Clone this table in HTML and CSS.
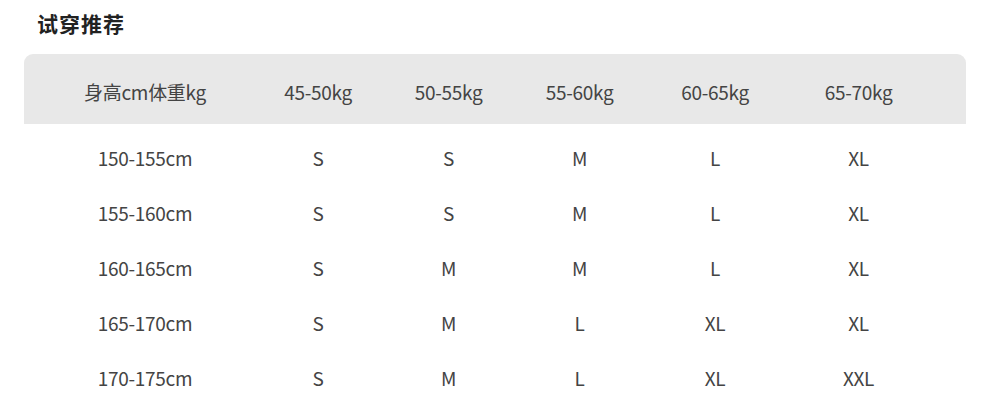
FILE: index.html
```html
<!DOCTYPE html>
<html lang="zh">
<head>
<meta charset="utf-8">
<link rel="stylesheet" href="styles.css">
</head>
<body>
<div class="page">
  <h2 class="title">试穿推荐</h2>
  <div class="table">
    <div class="row head">
      <div class="cell c1">身高cm体重kg</div>
      <div class="cell c2">45-50kg</div>
      <div class="cell c3">50-55kg</div>
      <div class="cell c4">55-60kg</div>
      <div class="cell c5">60-65kg</div>
      <div class="cell c6">65-70kg</div>
    </div>
    <div class="body">
      <div class="row">
        <div class="cell c1">150-155cm</div><div class="cell c2">S</div><div class="cell c3">S</div><div class="cell c4">M</div><div class="cell c5">L</div><div class="cell c6">XL</div>
      </div>
      <div class="row">
        <div class="cell c1">155-160cm</div><div class="cell c2">S</div><div class="cell c3">S</div><div class="cell c4">M</div><div class="cell c5">L</div><div class="cell c6">XL</div>
      </div>
      <div class="row">
        <div class="cell c1">160-165cm</div><div class="cell c2">S</div><div class="cell c3">M</div><div class="cell c4">M</div><div class="cell c5">L</div><div class="cell c6">XL</div>
      </div>
      <div class="row">
        <div class="cell c1">165-170cm</div><div class="cell c2">S</div><div class="cell c3">M</div><div class="cell c4">L</div><div class="cell c5">XL</div><div class="cell c6">XL</div>
      </div>
      <div class="row">
        <div class="cell c1">170-175cm</div><div class="cell c2">S</div><div class="cell c3">M</div><div class="cell c4">L</div><div class="cell c5">XL</div><div class="cell c6">XXL</div>
      </div>
    </div>
  </div>
</div>
</body>
</html>
```
FILE: styles.css
```css
html, body {
  margin: 0;
  padding: 0;
  background: #ffffff;
}
body {
  font-family: "Noto Sans CJK SC", "Noto Sans", sans-serif;
  color: #444;
}
.page {
  padding: 0 16px 0 24px;
}
.title {
  margin: 0;
  padding: 8px 0 0 13px;
  height: 54px;
  box-sizing: border-box;
  font-size: 21px;
  line-height: 30px;
  font-weight: 700;
  color: #222;
  letter-spacing: 1px;
}
.table {
  width: 942px;
}
.row {
  display: grid;
  grid-template-columns: 210px 149px 131px 131px 140px 181px;
  height: 55px;
  align-items: center;
}
.row.head {
  height: 70px;
  box-sizing: border-box;
  padding-top: 5px;
  background: #e8e8e8;
  border-radius: 9px 9px 0 0;
}
.body {
  padding-top: 6px;
}
.cell {
  text-align: center;
  font-size: 19px;
  line-height: 24px;
  color: #444;
  letter-spacing: -0.3px;
}
.c1 { padding-left: 32px; }
.c2 { padding-left: 19px; }
.c6 { padding-right: 34px; }
```
